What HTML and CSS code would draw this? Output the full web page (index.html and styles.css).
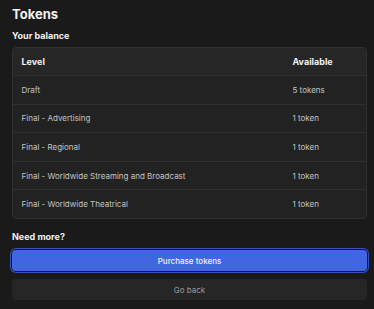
FILE: index.html
```html
<!DOCTYPE html>
<html lang="en">
<head>
<meta charset="utf-8">
<title>Tokens</title>
<link rel="stylesheet" href="styles.css">
</head>
<body>
<main class="page">
  <h1 class="title">Tokens</h1>
  <h2 class="subtitle">Your balance</h2>
  <div class="table">
    <div class="row head">
      <div class="cell level">Level</div>
      <div class="cell avail">Available</div>
    </div>
    <div class="row">
      <div class="cell level">Draft</div>
      <div class="cell avail">5 tokens</div>
    </div>
    <div class="row">
      <div class="cell level">Final - Advertising</div>
      <div class="cell avail">1 token</div>
    </div>
    <div class="row">
      <div class="cell level">Final - Regional</div>
      <div class="cell avail">1 token</div>
    </div>
    <div class="row">
      <div class="cell level">Final - Worldwide Streaming and Broadcast</div>
      <div class="cell avail">1 token</div>
    </div>
    <div class="row">
      <div class="cell level">Final - Worldwide Theatrical</div>
      <div class="cell avail">1 token</div>
    </div>
  </div>
  <h2 class="subtitle more">Need more?</h2>
  <button class="btn primary" type="button">Purchase tokens</button>
  <button class="btn secondary" type="button">Go back</button>
</main>
</body>
</html>
```
FILE: styles.css
```css
html, body {
  margin: 0;
  padding: 0;
  background: #1a1a1a;
}
body {
  font-family: Inter, "Noto Sans", sans-serif;
  color: #c4c4c4;
}
.page {
  padding: 6px 7px 0 12px;
  display: flex;
  flex-direction: column;
}
.title {
  margin: 0;
  font-size: 13px;
  line-height: 16px;
  font-weight: 700;
  color: #f2f2f2;
}
.subtitle {
  margin: 7.5px 0 0;
  font-size: 9px;
  line-height: 12px;
  font-weight: 700;
  color: #f0f0f0;
}
.table {
  margin-top: 5.5px;
  border: 1px solid #303030;
  border-radius: 4px;
  background: #222222;
  overflow: hidden;
}
.row {
  display: flex;
  align-items: center;
  height: 27.6px;
  border-top: 1px solid #303030;
  font-size: 8px;
}
.row.head {
  border-top: none;
  height: 27px;
  background: #262626;
  font-weight: 700;
  font-size: 9px;
  color: #f0f0f0;
}
.cell.level {
  width: 271px;
  padding-left: 8.5px;
  box-sizing: border-box;
}
.cell.avail {
  padding-left: 8.5px;
}
.subtitle.more {
  margin-top: 12.5px;
}
.btn {
  display: block;
  width: 100%;
  margin: 0;
  border: none;
  border-radius: 4px;
  font-family: Inter, "Noto Sans", sans-serif;
  font-size: 8px;
  font-weight: 500;
  text-align: center;
  cursor: pointer;
}
.primary {
  margin-top: 7px;
  height: 21px;
  background: #4167e0;
  color: #eef1ff;
  box-shadow: 0 0 0 1px #1a1a1a, 0 0 0 2px #3654b8;
}
.secondary {
  margin-top: 8px;
  height: 20.5px;
  background: #262626;
  color: #9a9a9a;
  font-weight: 400;
}
```
